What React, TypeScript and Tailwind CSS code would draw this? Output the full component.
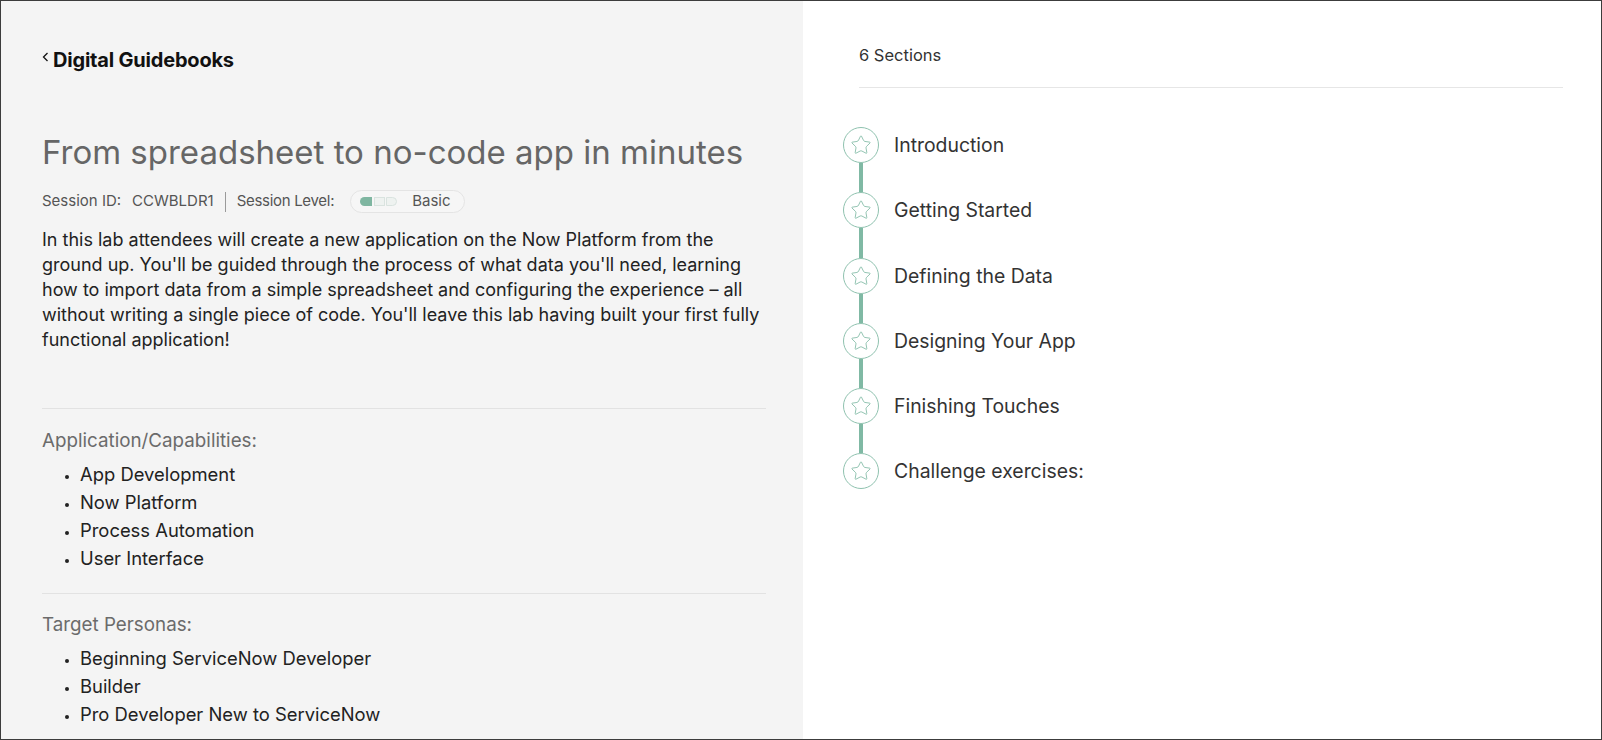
import { Star } from 'lucide-react';

const sections = [
  'Introduction',
  'Getting Started',
  'Defining the Data',
  'Designing Your App',
  'Finishing Touches',
  'Challenge exercises:',
];

const capabilities = ['App Development', 'Now Platform', 'Process Automation', 'User Interface'];
const personas = ['Beginning ServiceNow Developer', 'Builder', 'Pro Developer New to ServiceNow'];

function LevelBadge() {
  return (
    <div className="flex items-center h-[23px] rounded-full border border-[#e4e4e4] bg-[#f6f6f6] pl-[9px] pr-[13px]">
      <div className="flex items-center gap-[1.5px]">
        <span className="block w-[12px] h-[9px] rounded-l-full bg-[#7fb6a1]" />
        <span className="block w-[11px] h-[9px] border border-[#d9e3df] bg-[#eef2f0]" />
        <span className="block w-[11px] h-[9px] rounded-r-full border border-[#d9e3df] bg-[#eef2f0]" />
      </div>
      <span className="ml-[15px] text-[15px] text-[#555]">Basic</span>
    </div>
  );
}

function BulletList({ items }: { items: string[] }) {
  return (
    <ul className="mt-[7px] pl-[38px] list-disc marker:text-[#222] marker:text-[13px]">
      {items.map(item => (
        <li key={item} className="text-[18.4px] leading-[28px] text-[#222]">{item}</li>
      ))}
    </ul>
  );
}

export default function App() {
  return (
    <div className="h-[740px] w-full flex border border-[#3c3c3c] overflow-hidden font-['Inter',sans-serif]">
      {/* left: session details */}
      <div className="w-[802px] shrink-0 bg-[#f4f4f4] pl-[41px] pr-[37px] pt-[45px]">
        <div className="flex items-start">
          <svg width="7" height="10" viewBox="0 0 7 10" className="mt-[6px] mr-[4px]">
            <polyline points="5.5,1 1.5,5 5.5,9" fill="none" stroke="#111" strokeWidth="1.3" />
          </svg>
          <span className="text-[20px] leading-[28px] font-bold text-[#111] tracking-[-0.2px]">Digital Guidebooks</span>
        </div>

        <h1 className="mt-[58px] text-[33px] leading-[40px] text-[#666]">From spreadsheet to no-code app in minutes</h1>

        <div className="mt-[18px] flex items-center text-[15px] text-[#555]">
          <span>Session ID:</span>
          <span className="ml-[11px]">CCWBLDR1</span>
          <span className="mx-[11px] h-[20px] w-px bg-[#9a9a9a]" />
          <span className="tracking-[-0.3px]">Session Level:</span>
          <div className="ml-[16px]">
            <LevelBadge />
          </div>
        </div>

        <p className="mt-[14px] text-[18px] leading-[25px] text-[#222]">
          In this lab attendees will create a new application on the Now Platform from the ground up. You'll be guided through the process of what data you'll need, learning how to import data from a simple spreadsheet and configuring the experience – all without writing a single piece of code. You'll leave this lab having built your first fully functional application!
        </p>

        <div className="mt-[56px] border-t border-[#e2e2e2] pt-[19px]">
          <h3 className="text-[18.8px] leading-[25px] text-[#6b6b6b]">Application/Capabilities:</h3>
          <BulletList items={capabilities} />
        </div>

        <div className="mt-[21px] border-t border-[#e2e2e2] pt-[18px]">
          <h3 className="text-[18.8px] leading-[25px] text-[#6b6b6b]">Target Personas:</h3>
          <BulletList items={personas} />
        </div>
      </div>

      {/* right: section timeline */}
      <div className="flex-1 bg-white">
        <div className="mx-[56px] mr-[38px] pt-[42px] pb-[20px] border-b border-[#e6e6e6]">
          <span className="text-[16.5px] leading-[24px] text-[#333]">6 Sections</span>
        </div>
        <div className="pl-[40px] pt-[39px]">
          {sections.map((s, i) => (
            <div key={s} className={`flex ${i < sections.length - 1 ? 'h-[65.3px]' : ''}`}>
              <div className="flex flex-col items-center w-[36px]">
                <div className="w-[36px] h-[36px] shrink-0 rounded-full border border-[#8fc2af] flex items-center justify-center">
                  <Star size={22} strokeWidth={1.05} color="#8fc2af" />
                </div>
                {i < sections.length - 1 && <div className="w-[4px] flex-1 bg-[#80b9a4]" />}
              </div>
              <span className="ml-[15px] text-[19.4px] leading-[36px] text-[#333]">{s}</span>
            </div>
          ))}
        </div>
      </div>
    </div>
  );
}
